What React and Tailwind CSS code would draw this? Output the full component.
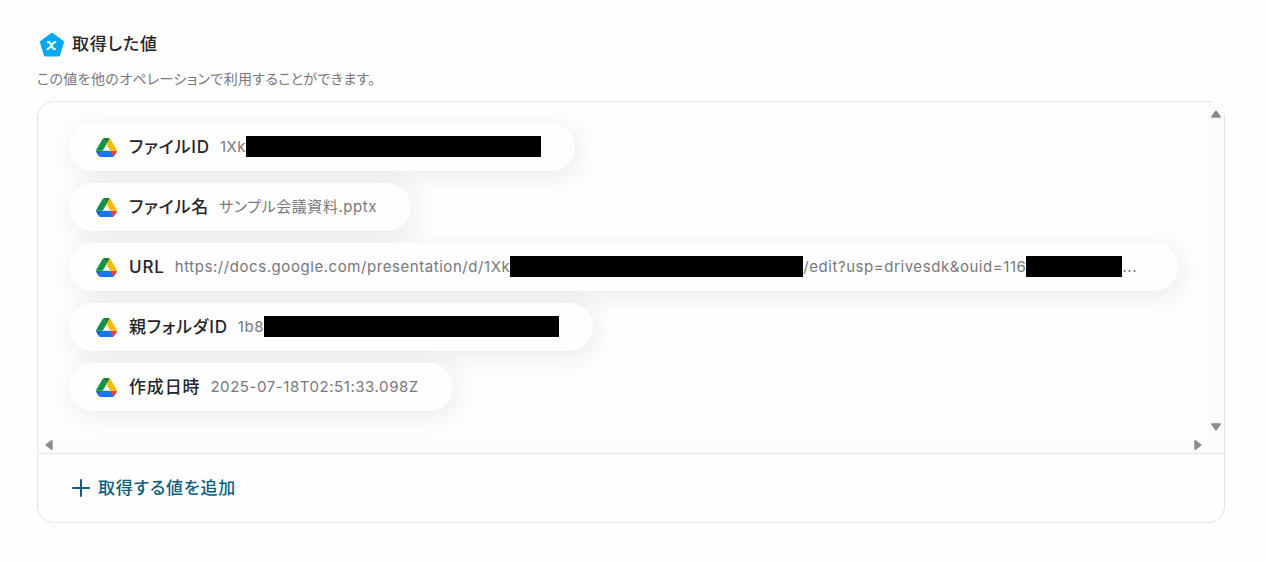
const rows = [
  { label: "ファイルID", parts: ["1Xk", { mask: "w-[295px]" }] },
  { label: "ファイル名", parts: ["サンプル会議資料.pptx"] },
  {
    label: "URL",
    fill: true,
    parts: [
      "https://docs.google.com/presentation/d/1Xk",
      { mask: "w-[293px]" },
      "/edit?usp=drivesdk&ouid=116",
      { mask: "w-24" },
      "...",
    ],
  },
  { label: "親フォルダID", parts: ["1b8", { mask: "w-[295px]" }] },
  { label: "作成日時", parts: ["2025-07-18T02:51:33.098Z"] },
];

function DriveIcon() {
  return (
    <svg viewBox="0 0 87.3 78" className="h-[19px] w-[21px] shrink-0" aria-hidden="true">
      <path fill="#1967d2" d="m6.6 66.85 3.85 6.65c.8 1.4 1.95 2.5 3.3 3.3l13.75-23.8h-27.5c0 1.55.4 3.1 1.2 4.5z" />
      <path fill="#0a9443" d="m43.65 25-13.75-23.8c-1.35.8-2.5 1.9-3.3 3.3l-25.4 44a9.06 9.06 0 0 0 -1.2 4.5h27.5z" />
      <path fill="#ea4335" d="m73.55 76.8c1.35-.8 2.5-1.9 3.3-3.3l1.6-2.75 7.65-13.25c.8-1.4 1.2-2.95 1.2-4.5h-27.502l5.852 11.5z" />
      <path fill="#188038" d="m43.65 25 13.75-23.8c-1.35-.8-2.9-1.2-4.5-1.2h-18.5c-1.6 0-3.15.45-4.5 1.2z" />
      <path fill="#1a73f8" d="m59.8 53h-32.3l-13.75 23.8c1.35.8 2.9 1.2 4.5 1.2h50.8c1.6 0 3.15-.45 4.5-1.2z" />
      <path fill="#fbbc04" d="m73.4 26.5-12.7-22c-.8-1.4-1.95-2.5-3.3-3.3l-13.75 23.8 16.15 28h27.45c0-1.55-.4-3.1-1.2-4.5z" />
    </svg>
  );
}

function ValueIcon() {
  return (
    <svg viewBox="0 0 26 26" className="size-[26px] shrink-0" aria-hidden="true">
      <path
        d="M13 3.6 23.2 11.2 19.4 23.7H6.6L2.8 11.2Z"
        fill="#03a9f4"
        stroke="#03a9f4"
        strokeWidth="3.6"
        strokeLinejoin="round"
      />
      <path
        d="M9 11C10.8 10.8 11.4 12 12.4 14.5C13.4 17.1 14.2 18.4 16 18M16.4 10.9C14.8 11 13.8 12.4 12.4 14.5C11 16.6 10 18 8.4 18.2"
        fill="none"
        stroke="#fff"
        strokeWidth="2"
        strokeLinecap="round"
      />
    </svg>
  );
}

function Arrow({ label, className }) {
  return (
    <button type="button" aria-label={label} className="flex size-4 items-center justify-center">
      <svg viewBox="0 0 10 8" className={className} aria-hidden="true">
        <path d="M5 1.4 9 6.8H1Z" fill="#8b8b8b" stroke="#8b8b8b" strokeWidth="1.8" strokeLinejoin="round" />
      </svg>
    </button>
  );
}

export default function App() {
  return (
    <main className="min-h-screen bg-[#fefefe] pt-8 pr-[41px] pb-10 pl-[37px] font-['Inter','Noto_Sans_CJK_JP',sans-serif] tracking-[0.035em] text-[#252528] [font-feature-settings:'palt']">
      <header>
        <h1 className="flex h-6 items-center gap-[7px] pl-[2px] text-[17px] leading-6 font-medium tracking-wider">
          <ValueIcon />
          取得した値
        </h1>
        <p className="mt-[13px] text-[14px] leading-5 tracking-wide text-[#78787c]">
          この値を他のオペレーションで利用することができます。
        </p>
      </header>

      <section className="relative mt-3 rounded-2xl border border-[#e6e5e8]">
        <span className="absolute -top-px -right-px size-[11px] bg-[#fefefe]" />
        <div className="grid grid-cols-[minmax(0,1fr)_16px] grid-rows-[minmax(0,1fr)_16px]">
          <ul className="flex flex-col items-start gap-3 overflow-hidden pt-[21px] pr-[30px] pb-[26px] pl-[31px]">
            {rows.map((row) => (
              <li
                key={row.label}
                className={`flex h-12 max-w-full items-center rounded-full bg-[#fefefe] pr-[34px] pl-[27px] whitespace-nowrap shadow-[3px_5px_24px_rgba(60,40,80,0.10)] ${row.fill ? "w-full" : ""}`}
              >
                <DriveIcon />
                <span className="ml-3 text-[17px] leading-6 font-medium tracking-wider">{row.label}</span>
                <span className="ml-[10px] flex items-center text-[15px] leading-6 text-[#78787c]">
                  {row.parts.map((part, i) =>
                    typeof part === "string" ? (
                      <span key={i}>{part}</span>
                    ) : (
                      <span key={i} className={`mb-[2px] h-[21px] bg-black ${part.mask}`} />
                    ),
                  )}
                </span>
              </li>
            ))}
          </ul>
          <div className="relative mt-1 flex flex-col items-center justify-between bg-[#fdfbfe] pb-[2px]">
            <Arrow label="上にスクロール" className="h-2 w-[10px]" />
            <Arrow label="下にスクロール" className="h-2 w-[10px] rotate-180" />
          </div>
          <div className="flex items-center justify-between bg-[#fdfbfe] pr-[2px] pl-[3px]">
            <Arrow label="左にスクロール" className="h-2 w-[10px] -rotate-90" />
            <Arrow label="右にスクロール" className="h-2 w-[10px] rotate-90" />
          </div>
          <div className="bg-[#fdfbfe]" />
        </div>
        <div className="flex h-[69px] items-center border-t border-[#e6e5e8] pl-[34px]">
          <button type="button" className="flex items-center gap-2 text-[17px] leading-6 font-medium tracking-wider text-[#0b5f80]">
            <svg viewBox="0 0 18 18" className="size-[18px]" aria-hidden="true">
              <path d="M9 1V17M1 9H17" stroke="currentColor" strokeWidth="2" strokeLinecap="round" />
            </svg>
            取得する値を追加
          </button>
        </div>
      </section>
    </main>
  );
}
